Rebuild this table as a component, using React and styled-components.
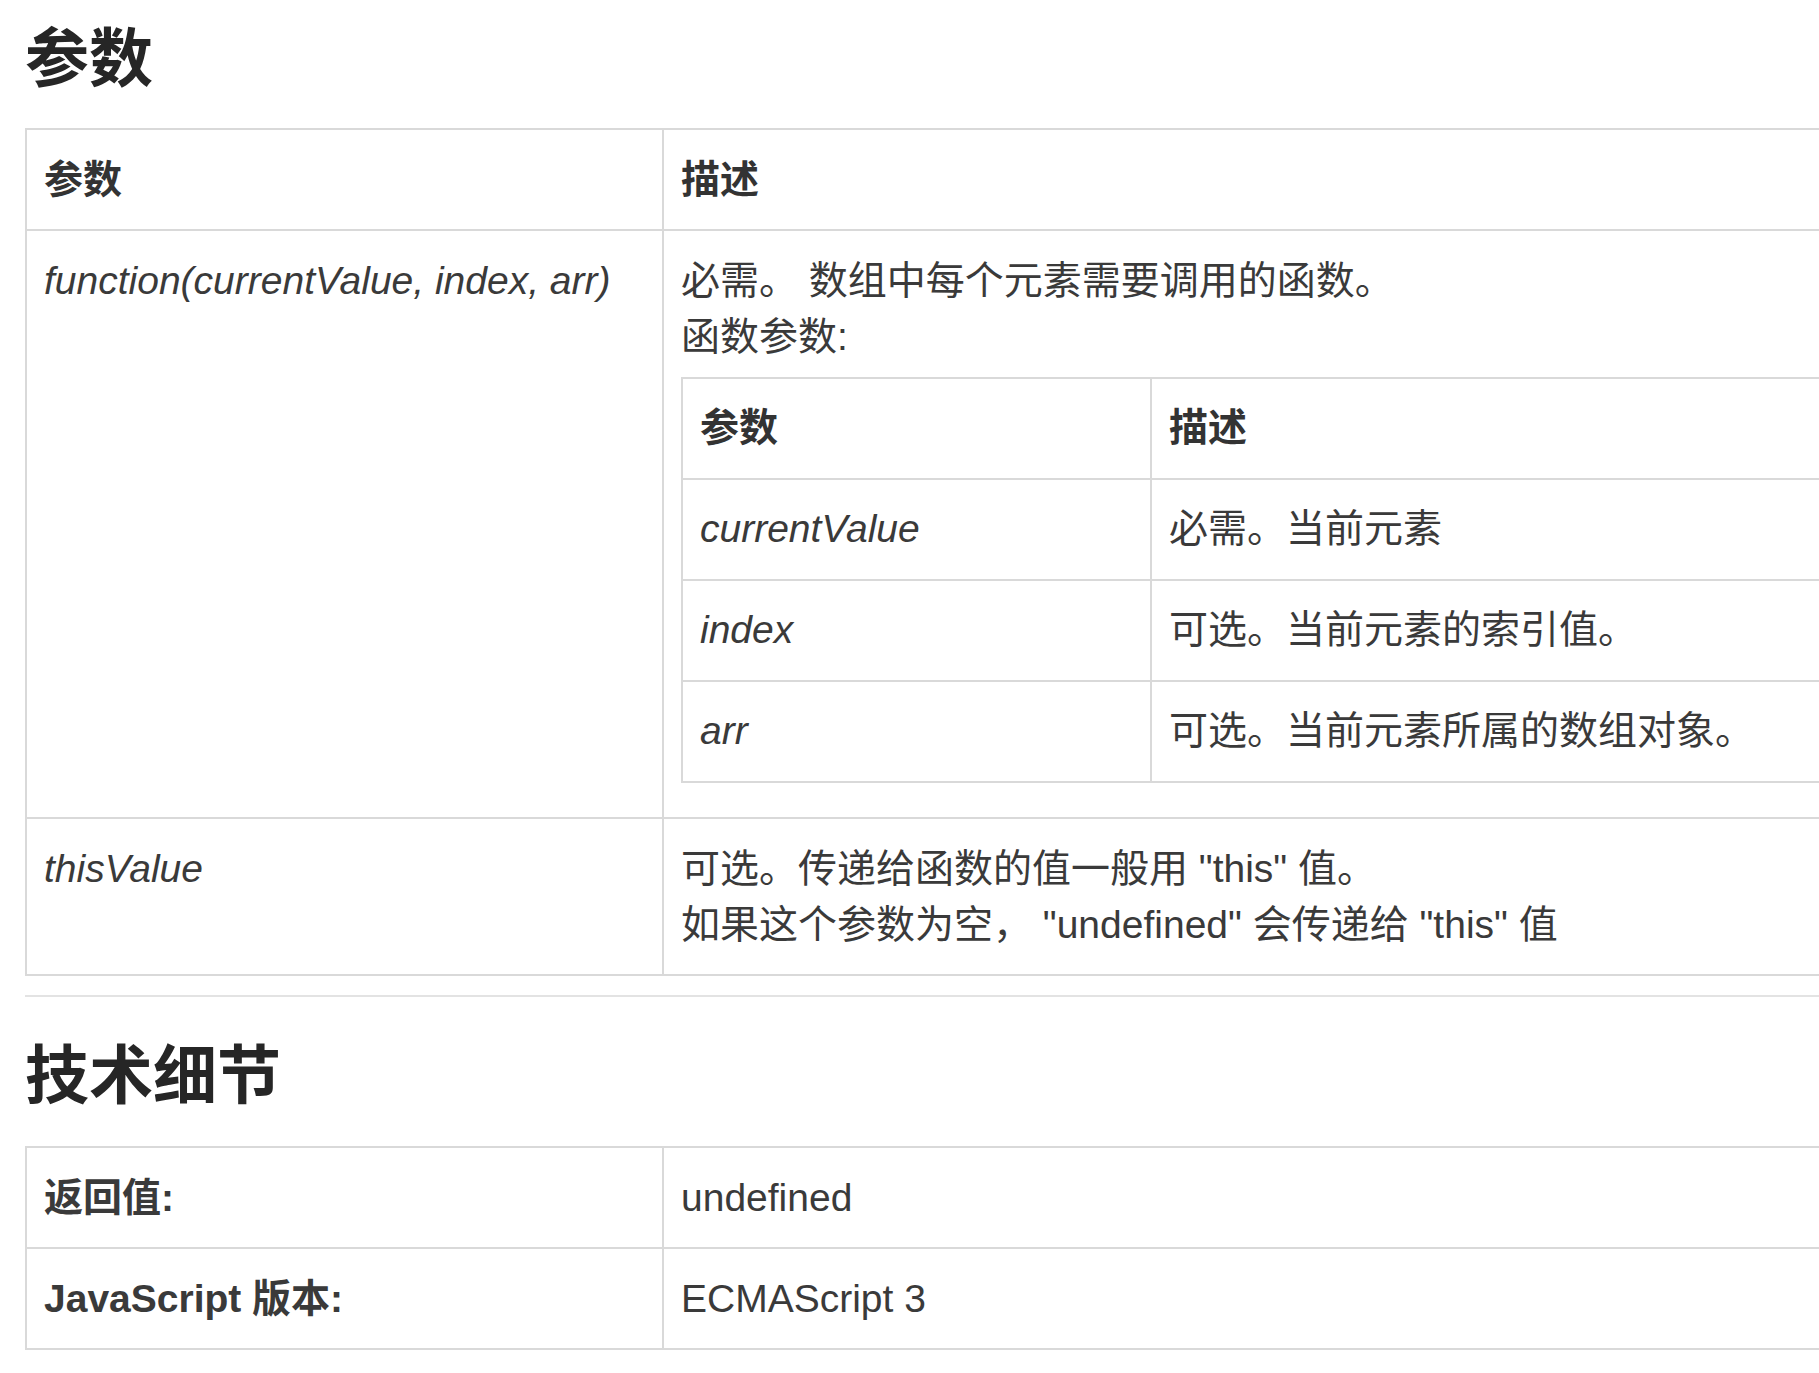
import React from "react";
import styled, { createGlobalStyle } from "styled-components";

const GlobalStyle = createGlobalStyle`
  html, body {
    margin: 0;
    padding: 0;
    background: #ffffff;
    overflow: hidden;
  }
  body {
    font-family: "Liberation Sans", "Noto Sans CJK SC", sans-serif;
    color: #333333;
  }
`;

const Page = styled.div`
  width: 100%;
  overflow: hidden;
  padding-left: 25px;
  box-sizing: border-box;
`;

const Title = styled.h2`
  margin: ${({ $top }) => $top}px 0 ${({ $bottom }) => $bottom}px;
  font-size: 64px;
  line-height: 77px;
  font-weight: 700;
  color: #262626;
  font-family: "Liberation Sans", "Noto Sans CJK SC", sans-serif;
`;

const Table = styled.table`
  width: ${({ $width }) => $width};
  border-collapse: collapse;
  table-layout: fixed;
  margin: ${({ $nested }) => ($nested ? "12px 0 13px" : "0")};
  font-size: 39px;
  line-height: 56px;
`;

const Th = styled.th`
  border: 2px solid #d9d9d9;
  padding: 21.5px 17px;
  text-align: left;
  font-weight: 700;
  color: #333333;
  vertical-align: middle;
`;

const Td = styled.td`
  border: 2px solid #d9d9d9;
  padding: 21.5px 17px;
  text-align: left;
  vertical-align: top;
  color: #3a3a3a;
  font-style: ${({ $italic }) => ($italic ? "italic" : "normal")};
  font-weight: ${({ $bold }) => ($bold ? 700 : 400)};
`;

const Line = styled.div`
  white-space: nowrap;
`;

const Divider = styled.div`
  width: 2000px;
  height: 2px;
  background: #e3e3e3;
  margin-top: 19px;
`;

const subParams = [
  ["currentValue", "必需。当前元素"],
  ["index", "可选。当前元素的索引值。"],
  ["arr", "可选。当前元素所属的数组对象。"],
];

const App = () => {
  return (
    <>
      <GlobalStyle />
      <Page>
        <Title $top={21} $bottom={30}>参数</Title>
        <Table $width="2400px">
          <colgroup>
            <col style={{ width: 637 }} />
            <col />
          </colgroup>
          <thead>
            <tr>
              <Th>参数</Th>
              <Th>描述</Th>
            </tr>
          </thead>
          <tbody>
            <tr>
              <Td $italic>function(currentValue, index, arr)</Td>
              <Td>
                <Line>必需。 数组中每个元素需要调用的函数。</Line>
                <Line>函数参数:</Line>
                <Table $width="100%" $nested>
                  <colgroup>
                    <col style={{ width: 469 }} />
                    <col />
                  </colgroup>
                  <thead>
                    <tr>
                      <Th>参数</Th>
                      <Th>描述</Th>
                    </tr>
                  </thead>
                  <tbody>
                    {subParams.map(([name, desc]) => (
                      <tr key={name}>
                        <Td $italic>{name}</Td>
                        <Td>{desc}</Td>
                      </tr>
                    ))}
                  </tbody>
                </Table>
              </Td>
            </tr>
            <tr>
              <Td $italic>thisValue</Td>
              <Td>
                <Line>可选。传递给函数的值一般用 "this" 值。</Line>
                <Line>如果这个参数为空， "undefined" 会传递给 "this" 值</Line>
              </Td>
            </tr>
          </tbody>
        </Table>
        <Divider />
        <Title $top={41} $bottom={31}>技术细节</Title>
        <Table $width="2400px">
          <colgroup>
            <col style={{ width: 637 }} />
            <col />
          </colgroup>
          <tbody>
            <tr>
              <Td $bold>返回值:</Td>
              <Td>undefined</Td>
            </tr>
            <tr>
              <Td $bold>JavaScript 版本:</Td>
              <Td>ECMAScript 3</Td>
            </tr>
          </tbody>
        </Table>
      </Page>
    </>
  );
};

export default App;
